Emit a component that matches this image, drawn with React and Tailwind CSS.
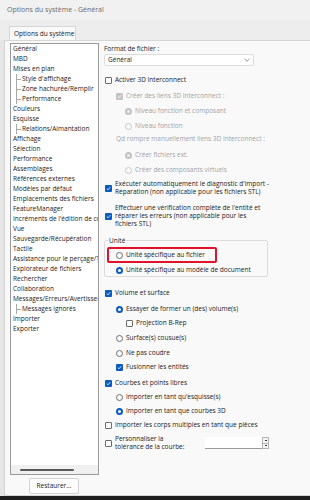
import React from "react";

const TREE = [
  ["Général", 0],
  ["MBD", 0],
  ["Mises en plan", 0],
  ["Style d'affichage", 1],
  ["Zone hachurée/Remplir", 1],
  ["Performance", 1],
  ["Couleurs", 0],
  ["Esquisse", 0],
  ["Relations/Aimantation", 1],
  ["Affichage", 0],
  ["Sélection", 0],
  ["Performance", 0],
  ["Assemblages", 0],
  ["Références externes", 0],
  ["Modèles par défaut", 0],
  ["Emplacements des fichiers", 0],
  ["FeatureManager", 0],
  ["Incréments de l'édition de compteurs", 0],
  ["Vue", 0],
  ["Sauvegarde/Récupération", 0],
  ["Tactile", 0],
  ["Assistance pour le perçage/Toolbox", 0],
  ["Explorateur de fichiers", 0],
  ["Rechercher", 0],
  ["Collaboration", 0],
  ["Messages/Erreurs/Avertissements", 0],
  ["Messages ignorés", 1],
  ["Importer", 0],
  ["Exporter", 0],
];

function Check({ on, disabled }) {
  if (on) {
    return (
      <span className={`w-[7px] h-[7px] rounded-[1px] shrink-0 flex items-center justify-center ${disabled ? "bg-[#c4c4c4]" : "bg-[#0b5cbd]"}`}>
        <svg width="5" height="5" viewBox="0 0 10 10">
          <path d="M1.5 5.2 L4 7.6 L8.6 2.4" fill="none" stroke="#fff" strokeWidth="1.6" />
        </svg>
      </span>
    );
  }
  return <span className="w-[7px] h-[7px] rounded-[1px] shrink-0 border border-[#6b6b6b] bg-[#fdfdfd]" />;
}

function Radio({ on, disabled }) {
  if (disabled) {
    return on ? (
      <span className="w-[7px] h-[7px] rounded-full shrink-0 border-2 border-[#c3c3c3] bg-[#ececec]" />
    ) : (
      <span className="w-[7px] h-[7px] rounded-full shrink-0 border border-[#c8c8c8] bg-[#fafafa]" />
    );
  }
  return on ? (
    <span className="w-[7px] h-[7px] rounded-full shrink-0 border-2 border-[#0b5cbd] bg-white" />
  ) : (
    <span className="w-[7px] h-[7px] rounded-full shrink-0 border border-[#6b6b6b] bg-[#fdfdfd]" />
  );
}

export default function App() {
  return (
    <div
      className="w-[310px] h-[500px] bg-[#efefef] flex flex-col overflow-hidden text-[#1b1b1b] text-[6.5px] leading-[10px]"
      style={{ fontFamily: "'Open Sans', 'Noto Sans', sans-serif" }}
    >
      {/* title bar */}
      <div className="h-[20px] shrink-0 flex items-center pl-[7px] text-[7px] text-[#6a6a6a] bg-[#f1f1f1] whitespace-nowrap">
        Options du système - Général
      </div>

      {/* tab strip */}
      <div className="h-[20px] shrink-0 flex items-end pl-[5px] bg-[#ededed]">
        <div className="ml-[4px] h-[14px] w-[67px] bg-[#f9f9f9] border border-b-0 border-[#d6d6d6] flex items-center pl-[4px] text-[#1b1b1b] whitespace-nowrap">
          Options du système
        </div>
      </div>

      <div className="flex flex-1 min-h-0">
        <div className="w-[5px] bg-[#e6e6e6] border-r border-[#d4d4d4]" />
        <div className="flex-1 h-[456px] bg-[#f9f9f9] border-t border-b border-[#d6d6d6] flex">
          {/* left tree */}
          <div className="w-[99px] pl-[5px] pt-[2px] flex flex-col">
            <div className="w-[89px] h-[432px] border border-[#9a9a9a] bg-white flex flex-col overflow-hidden">
              <div className="flex-1 pl-[2px] overflow-hidden">
                {TREE.map(([t, lvl], i) => (
                  <div key={i} className="h-[10px] flex items-center whitespace-nowrap">
                    {lvl === 1 ? (
                      <>
                        <span className="w-[5px] h-[10px] ml-[3px] border-l border-[#a8a8a8] shrink-0 flex items-center">
                          <span className="w-[4px] border-t border-[#a8a8a8]" />
                        </span>
                        <span className="pl-[1px]">{t}</span>
                      </>
                    ) : (
                      <span>{t}</span>
                    )}
                  </div>
                ))}
              </div>
              <div className="h-[9px] bg-[#f0f0f0] flex items-center pl-[9px]">
                <span className="w-[54px] h-[2px] rounded-full bg-[#5a5a5a]" />
              </div>
            </div>
            <div className="mt-[3px] ml-[19px] w-[50px] h-[16px] bg-[#fdfdfd] border border-[#d2d2d2] rounded-[2px] flex items-center justify-center">
              Restaurer...
            </div>
          </div>

          {/* right options */}
          <div className="flex-1 pt-[3px] flex flex-col">
            <div className="h-[10px] flex items-center">Format de fichier :</div>
            <div className="w-[150px] h-[12px] bg-white border border-[#dcdcdc] rounded-[2px] flex items-center justify-between px-[3px]">
              <span>Général</span>
              <svg width="6" height="4" viewBox="0 0 6 4">
                <path d="M0.5 0.8 L3 3.2 L5.5 0.8" fill="none" stroke="#777" strokeWidth="0.8" />
              </svg>
            </div>

            <div className="mt-[9px] h-[10px] flex items-center gap-[3px] pl-[1px]">
              <Check /> <span>Activer 3D Interconnect</span>
            </div>
            <div className="mt-[6px] h-[10px] flex items-center gap-[3px] pl-[12px] text-[#a3a3a3]">
              <Check on disabled /> <span>Créer des liens 3D Interconnect :</span>
            </div>
            <div className="mt-[5px] h-[10px] flex items-center gap-[3px] pl-[21px] text-[#a3a3a3]">
              <Radio on disabled /> <span>Niveau fonction et composant</span>
            </div>
            <div className="mt-[5px] h-[10px] flex items-center gap-[3px] pl-[21px] text-[#a3a3a3]">
              <Radio disabled /> <span>Niveau fonction</span>
            </div>
            <div className="mt-[3px] h-[10px] flex items-center pl-[12px] text-[#a3a3a3]">
              Qd rompre manuellement liens 3D Interconnect :
            </div>
            <div className="mt-[6px] h-[10px] flex items-center gap-[3px] pl-[21px] text-[#a3a3a3]">
              <Radio on disabled /> <span>Créer fichiers ext.</span>
            </div>
            <div className="mt-[5px] h-[10px] flex items-center gap-[3px] pl-[21px] text-[#a3a3a3]">
              <Radio disabled /> <span>Créer des composants virtuels</span>
            </div>

            <div className="mt-[5px] flex items-center gap-[3px] pl-[1px] leading-[8px]">
              <Check on />
              <span>
                Exécuter automatiquement le diagnostic d'import -<br />
                Réparation (non applicable pour les fichiers STL)
              </span>
            </div>
            <div className="mt-[8px] flex items-center gap-[3px] pl-[1px] leading-[8px]">
              <Check on />
              <span>
                Effectuer une vérification complète de l'entité et<br />
                réparer les erreurs (non applicable pour les<br />
                fichiers STL)
              </span>
            </div>

            {/* Unité group */}
            <div className="mt-[12px] w-[164px] h-[37px] border border-[#dcdcdc] rounded-[2px] relative flex flex-col pl-[2px]">
              <span className="absolute -top-[5px] left-[3px] px-[1px] bg-[#f9f9f9] leading-[10px]">Unité</span>
              <div className="mt-[6px] w-[110px] h-[16px] border-2 border-[#e3122b] rounded-[2px] flex items-center gap-[3px] pl-[7px]">
                <Radio /> <span>Unité spécifique au fichier</span>
              </div>
              <div className="mt-[2px] h-[10px] flex items-center gap-[3px] pl-[9px]">
                <Radio on /> <span>Unité spécifique au modèle de document</span>
              </div>
            </div>

            <div className="mt-[11px] h-[10px] flex items-center gap-[3px] pl-[1px]">
              <Check on /> <span>Volume et surface</span>
            </div>
            <div className="mt-[6px] h-[10px] flex items-center gap-[3px] pl-[12px]">
              <Radio on /> <span>Essayer de former un (des) volume(s)</span>
            </div>
            <div className="mt-[4px] h-[10px] flex items-center gap-[3px] pl-[22px]">
              <Check /> <span>Projection B-Rep</span>
            </div>
            <div className="mt-[5px] h-[10px] flex items-center gap-[3px] pl-[12px]">
              <Radio /> <span>Surface(s) cousue(s)</span>
            </div>
            <div className="mt-[5px] h-[10px] flex items-center gap-[3px] pl-[12px]">
              <Radio /> <span>Ne pas coudre</span>
            </div>
            <div className="mt-[4px] h-[10px] flex items-center gap-[3px] pl-[12px]">
              <Check on /> <span>Fusionner les entités</span>
            </div>
            <div className="mt-[6px] h-[10px] flex items-center gap-[3px] pl-[1px]">
              <Check on /> <span>Courbes et points libres</span>
            </div>
            <div className="mt-[4px] h-[10px] flex items-center gap-[3px] pl-[12px]">
              <Radio /> <span>Importer en tant qu'esquisse(s)</span>
            </div>
            <div className="mt-[4px] h-[10px] flex items-center gap-[3px] pl-[12px]">
              <Radio on /> <span>Importer en tant que courbes 3D</span>
            </div>
            <div className="mt-[4px] h-[10px] flex items-center gap-[3px] pl-[1px]">
              <Check /> <span>Importer les corps multiples en tant que pièces</span>
            </div>
            <div className="mt-[5px] flex items-center pl-[1px]">
              <div className="w-[100px] flex items-center gap-[3px] leading-[8px]">
                <Check />
                <span>
                  Personnaliser la<br />
                  tolérance de la courbe:
                </span>
              </div>
              <div className="w-[57px] h-[12px] bg-white border-b border-[#9a9a9a]" />
              <div className="w-[7px] h-[12px] flex flex-col border border-[#b5b5b5]">
                <span className="flex-1 bg-[#f4f4f4] border-b border-[#b5b5b5] flex items-center justify-center">
                  <span className="w-[2px] h-[1px] bg-[#333]" />
                </span>
                <span className="flex-1 bg-[#f4f4f4] flex items-center justify-center">
                  <span className="w-[2px] h-[1px] bg-[#333]" />
                </span>
              </div>
            </div>
          </div>
        </div>
      </div>
      <div className="h-[4px] shrink-0 bg-[#1f1f1f]" />
    </div>
  );
}
